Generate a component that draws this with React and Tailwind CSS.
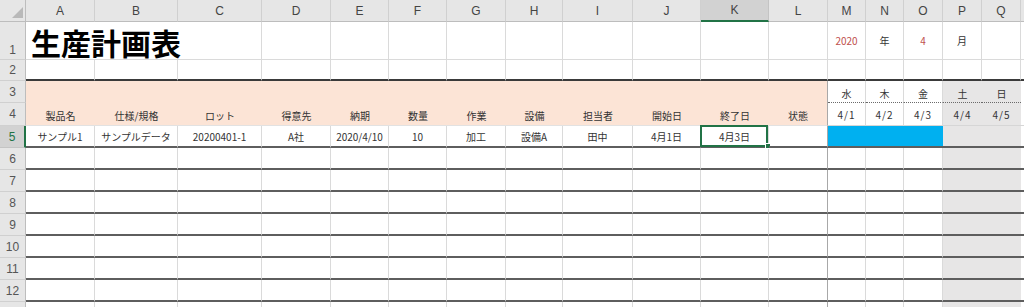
import React from "react";
import clsx from "clsx";

// row header + columns A..R (R is cut off at the window edge)
const GRID =
  "grid grid-cols-[26px_69px_83px_84px_69px_58px_58px_59px_57px_70px_68px_68px_59px_38px_38px_39px_39px_39px_40px]";

const LETTERS = "ABCDEFGHIJKLMNOPQR".split("");

const HEADERS = ["製品名", "仕様/規格", "ロット", "得意先", "納期", "数量", "作業", "設備", "担当者", "開始日", "終了日", "状態"];
const SAMPLE = ["サンプル1", "サンプルデータ", "20200401-1", "A社", "2020/4/10", "10", "加工", "設備A", "田中", "4月1日", "4月3日", ""];

const CALENDAR = [
  { day: "水", date: "4/1", off: false },
  { day: "木", date: "4/2", off: false },
  { day: "金", date: "4/3", off: false },
  { day: "土", date: "4/4", off: true },
  { day: "日", date: "4/5", off: true },
];

function RowHead({ n, active, tall }) {
  return (
    <div
      className={clsx(
        "flex justify-center border-b font-['Liberation_Sans',sans-serif] text-[12px] leading-[14px]",
        tall ? "items-end pb-[2px]" : "items-center",
        active
          ? "bg-[#d2d2d2] text-[#217346] border-r-2 border-r-[#217346] border-b-[#c4c4c4]"
          : "bg-[#e6e6e6] text-[#555] border-r border-r-[#bdbdbd] border-b-[#d0d0d0]"
      )}
    >
      {n}
    </div>
  );
}

// one of the plain rows below the data row: dark rule under each, weekend shaded
function BlankRow({ n }) {
  return (
    <div className={clsx(GRID, "h-[22px]")}>
      <RowHead n={n} />
      {LETTERS.slice(0, 11).map((l) => (
        <div key={l} className="border-r border-r-[#dadada] border-b-2 border-b-[#5e5e5e]" />
      ))}
      <div className="border-r border-r-[#a8a8a8] border-b-2 border-b-[#5e5e5e]" />
      {CALENDAR.map((c) =>
        c.off ? (
          <div key={c.date} className="bg-[#e7e6e6] border-b-2 border-b-[#5e5e5e]" />
        ) : (
          <div key={c.date} className="border-r border-r-[#dadada] border-b-2 border-b-[#5e5e5e]" />
        )
      )}
      <div className="border-b-2 border-b-[#5e5e5e]" />
    </div>
  );
}

export default function App() {
  return (
    <div className="w-[1024px] h-[307px] overflow-hidden bg-white font-['Noto_Sans_CJK_JP',sans-serif] text-[10px] text-[#333]">
      {/* column letters */}
      <div className={clsx(GRID, "h-[22px] bg-[#e6e6e6] font-['Liberation_Sans',sans-serif] text-[12px] text-[#444]")}>
        <div className="relative border-r border-b border-r-[#bdbdbd] border-b-[#bdbdbd]">
          <svg className="absolute right-[2px] bottom-[3px]" width="11" height="11" viewBox="0 0 11 11">
            <path d="M11 0 L11 11 L0 11 Z" fill="#b9b9b9" />
          </svg>
        </div>
        {LETTERS.map((l) => (
          <div
            key={l}
            className={clsx(
              "flex items-center justify-center border-r",
              l === "K"
                ? "bg-[#d2d2d2] border-r-[#c4c4c4] border-b-2 border-b-[#217346]"
                : "border-r-[#d0d0d0] border-b border-b-[#bdbdbd]"
            )}
          >
            {l}
          </div>
        ))}
      </div>

      {/* row 1: title and year / month */}
      <div className={clsx(GRID, "h-[38px]")}>
        <RowHead n={1} tall />
        <div className="col-span-3 flex items-center pl-[5px] pt-[3px] border-r border-b border-[#dadada] text-[30px] leading-[30px] font-bold text-black">
          生産計画表
        </div>
        {LETTERS.slice(3, 12).map((l) => (
          <div key={l} className="border-r border-b border-[#dadada]" />
        ))}
        <div className="flex items-center justify-center border-r border-b border-[#dadada] text-[#c0504d]">2020</div>
        <div className="flex items-center justify-center border-r border-b border-[#dadada]">年</div>
        <div className="flex items-center justify-center border-r border-b border-[#dadada] text-[#c0504d]">4</div>
        <div className="flex items-center justify-center border-r border-b border-[#dadada]">月</div>
        <div className="border-r border-b border-[#dadada]" />
        <div className="border-b border-[#dadada]" />
      </div>

      {/* row 2 with the heavy rule under it */}
      <div className={clsx(GRID, "h-[21px]")}>
        <RowHead n={2} />
        {LETTERS.map((l) => (
          <div key={l} className="border-r border-r-[#dadada] border-b-2 border-b-[#3a3a3a]" />
        ))}
      </div>

      {/* row 3: header band + weekdays */}
      <div className={clsx(GRID, "h-[22px]")}>
        <RowHead n={3} />
        <div className="col-span-12 bg-[#fce4d6] border-r border-r-[#a8a8a8]" />
        {CALENDAR.map((c) => (
          <div
            key={c.day}
            className={clsx(
              "flex items-end justify-center pb-[1px] border-b border-b-[#6a6a6a] [border-bottom-style:dotted]",
              c.off ? "bg-[#e7e6e6]" : "border-r border-r-[#dadada]"
            )}
          >
            {c.day}
          </div>
        ))}
        <div />
      </div>

      {/* row 4: column titles + dates */}
      <div className={clsx(GRID, "h-[23px]")}>
        <RowHead n={4} />
        {HEADERS.map((h, i) => (
          <div
            key={h}
            className={clsx(
              "flex items-center justify-center pt-[2px] bg-[#fce4d6] border-b border-b-[#e2e2e2]",
              i === 11 && "border-r border-r-[#a8a8a8]"
            )}
          >
            {h}
          </div>
        ))}
        {CALENDAR.map((c) => (
          <div
            key={c.date}
            className={clsx(
              "flex items-center justify-center pt-[1px] tracking-[1px] border-b border-b-[#d6d6d6]",
              c.off ? "bg-[#e7e6e6]" : "border-r border-r-[#dadada]"
            )}
          >
            {c.date}
          </div>
        ))}
        <div className="border-b border-b-[#d6d6d6]" />
      </div>

      {/* row 5: sample record, 4/1 - 4/3 scheduled */}
      <div className={clsx(GRID, "h-[22px]")}>
        <RowHead n={5} active />
        {SAMPLE.map((v, i) => (
          <div
            key={i}
            className={clsx(
              "relative flex items-center justify-center whitespace-nowrap border-r border-b-2 border-b-[#5e5e5e]",
              i === 11 ? "border-r-[#a8a8a8]" : "border-r-[#dadada]"
            )}
          >
            {v}
            {i === 10 && (
              <>
                <span className="absolute -left-[1px] -top-[1px] right-0 -bottom-[1px] border-2 border-[#217346]" />
                <span className="absolute -right-[3px] -bottom-[3px] w-[6px] h-[6px] bg-[#217346] border border-white" />
              </>
            )}
          </div>
        ))}
        <div className="col-span-3 bg-[#00b0f0] border-b-2 border-b-[#5e5e5e]" />
        <div className="col-span-2 bg-[#e7e6e6] border-b-2 border-b-[#5e5e5e]" />
        <div className="border-b-2 border-b-[#5e5e5e]" />
      </div>

      {[6, 7, 8, 9, 10, 11, 12, 13].map((n) => (
        <BlankRow key={n} n={n} />
      ))}
    </div>
  );
}
